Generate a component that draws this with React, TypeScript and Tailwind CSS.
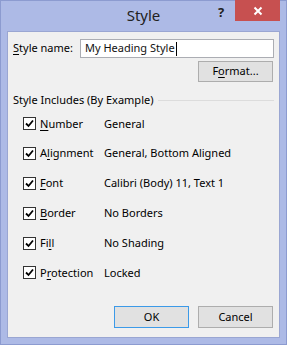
import React from "react";

const font = { fontFamily: '"Noto Sans", sans-serif' };

function U({ children }: { children: React.ReactNode }) {
  return <span className="underline underline-offset-2 decoration-1">{children}</span>;
}

function Check() {
  return (
    <div className="w-[13px] h-[13px] border border-[#333333] bg-white flex items-center justify-center shrink-0">
      <svg width="9" height="9" viewBox="0 0 9 9">
        <path d="M1 4.5 L3.5 7 L8 1.5" stroke="#000" strokeWidth="1.8" fill="none" />
      </svg>
    </div>
  );
}

function Row({ label, value }: { label: React.ReactNode; value: string }) {
  return (
    <div className="flex items-center h-[29.8px] pl-[15px]">
      <Check />
      <div className="w-[68px] pl-[4px]">{label}</div>
      <div>{value}</div>
    </div>
  );
}

export default function App() {
  return (
    <div
      className="w-[287px] h-[345px] bg-[#adbae6] flex flex-col text-[11px] text-black border border-[#8c9bd0]"
      style={font}
    >
      <div className="relative h-[30px] shrink-0">
        <div className="absolute inset-x-0 top-[3px] text-center text-[15px] text-[#222]">Style</div>
        <div className="absolute left-[217px] top-[2px] text-[13px] font-bold text-[#222]">?</div>
        <div className="absolute left-[234px] top-[-1px] w-[45px] h-[21px] bg-[#c75050] flex items-center justify-center">
          <svg width="10" height="10" viewBox="0 0 10 10">
            <path d="M1.5 1.5 L8.5 8.5 M8.5 1.5 L1.5 8.5" stroke="#fff" strokeWidth="2" />
          </svg>
        </div>
      </div>
      <div className="mx-[6px] mb-[6px] flex-1 bg-[#f0f0f0] border border-[#9aa6d2] flex flex-col">
        <div className="flex items-center mt-[7px] pl-[5px] pr-[5px]">
          <div className="w-[67px]"><U>S</U>tyle name:</div>
          <div className="flex-1 h-[19px] bg-white border border-[#abadb3] flex items-center pl-[4px] text-[#111]">
            My Heading Style<span className="inline-block w-px h-[14px] bg-black ml-px" />
          </div>
        </div>
        <div className="flex justify-end mt-[3px] pr-[6px]">
          <div className="w-[75px] h-[21px] bg-[#e1e1e1] border border-[#adadad] flex items-center justify-center">
            F<U>o</U>rmat...
          </div>
        </div>
        <div className="flex items-center mt-[10px] pl-[5px] pr-[5px] h-[17px]">
          <div className="whitespace-nowrap">Style Includes (By Example)</div>
          <div className="flex-1 h-px bg-[#dcdcdc] ml-[5px]" />
        </div>
        <div className="flex flex-col">
          <Row label={<><U>N</U>umber</>} value="General" />
          <Row label={<>A<U>l</U>ignment</>} value="General, Bottom Aligned" />
          <Row label={<><U>F</U>ont</>} value="Calibri (Body) 11, Text 1" />
          <Row label={<><U>B</U>order</>} value="No Borders" />
          <Row label={<>Fi<U>l</U>l</>} value="No Shading" />
          <Row label={<>P<U>r</U>otection</>} value="Locked" />
        </div>
        <div className="flex-1" />
        <div className="flex justify-end gap-[9px] pr-[6px] mb-[9px]">
          <div className="w-[75px] h-[22px] bg-[#e1e1e1] border border-[#3c9ae8] flex items-center justify-center">
            OK
          </div>
          <div className="w-[75px] h-[22px] bg-[#e1e1e1] border border-[#adadad] flex items-center justify-center">
            Cancel
          </div>
        </div>
      </div>
    </div>
  );
}
